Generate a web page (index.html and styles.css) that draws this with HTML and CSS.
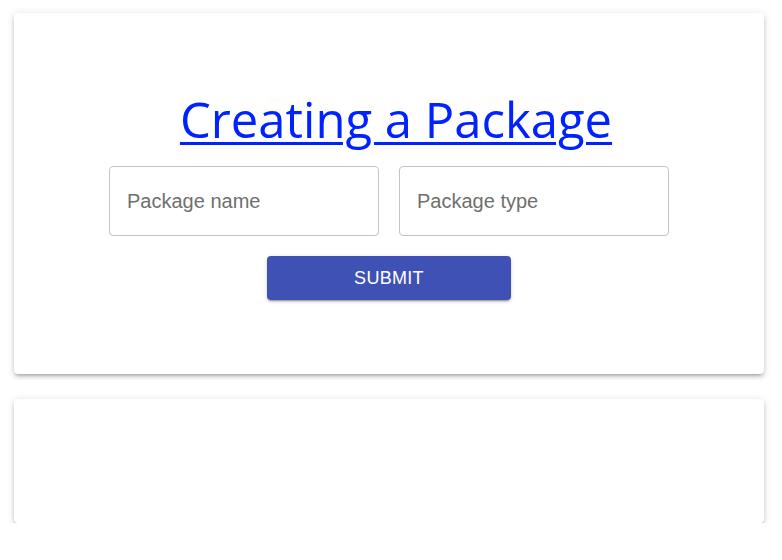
FILE: index.html
```html
<!DOCTYPE html>
<html>
<head>
<meta charset="utf-8">
<link rel="stylesheet" href="styles.css">
</head>
<body>
<div class="page">
  <div class="card card-main">
    <h1 class="title"><a href="#">Creating a Package</a></h1>
    <div class="fields">
      <div class="field"><span class="placeholder">Package name</span></div>
      <div class="field"><span class="placeholder">Package type</span></div>
    </div>
    <button class="submit">SUBMIT</button>
  </div>
  <div class="card card-empty"></div>
</div>
</body>
</html>
```
FILE: styles.css
```css
html, body {
  margin: 0;
  padding: 0;
  background: #ffffff;
}
.page {
  display: flex;
  flex-direction: column;
  gap: 25px;
  padding: 13px 18px 0 14px;
}
.card {
  background: #fff;
  border-radius: 4px;
  box-shadow: 0px 3px 3px -2px rgba(0,0,0,0.2), 0px 3px 4px 0px rgba(0,0,0,0.14), 0px 1px 8px 0px rgba(0,0,0,0.12);
}
.card-main {
  height: 361px;
  box-sizing: border-box;
  display: flex;
  flex-direction: column;
  align-items: center;
  padding-top: 65px;
}
.card-empty {
  height: 124px;
}
.title {
  margin: 0;
  padding-left: 14px;
  font-family: "Open Sans", "Noto Sans", sans-serif;
  font-weight: 500;
  font-size: 49px;
  line-height: 82px;
}
.title a {
  color: #0022ff;
  text-decoration: underline;
  text-decoration-thickness: 3px;
  text-underline-offset: 4px;
}
.fields {
  display: flex;
  gap: 20px;
  margin-top: 6px;
}
.field {
  width: 270px;
  height: 70px;
  box-sizing: border-box;
  border: 1px solid #c4c4c4;
  border-radius: 4px;
  display: flex;
  align-items: center;
  padding-left: 17px;
}
.placeholder {
  font-family: "Liberation Sans", Arial, sans-serif;
  font-size: 20px;
  color: #6f6f6f;
}
.submit {
  margin-top: 20px;
  width: 244px;
  height: 44px;
  border: none;
  border-radius: 4px;
  background: #3f51b5;
  color: #fff;
  font-family: "Liberation Sans", Arial, sans-serif;
  font-size: 18px;
  letter-spacing: 0.3px;
  box-shadow: 0px 3px 1px -2px rgba(0,0,0,0.2), 0px 2px 2px 0px rgba(0,0,0,0.14), 0px 1px 5px 0px rgba(0,0,0,0.12);
}
```
